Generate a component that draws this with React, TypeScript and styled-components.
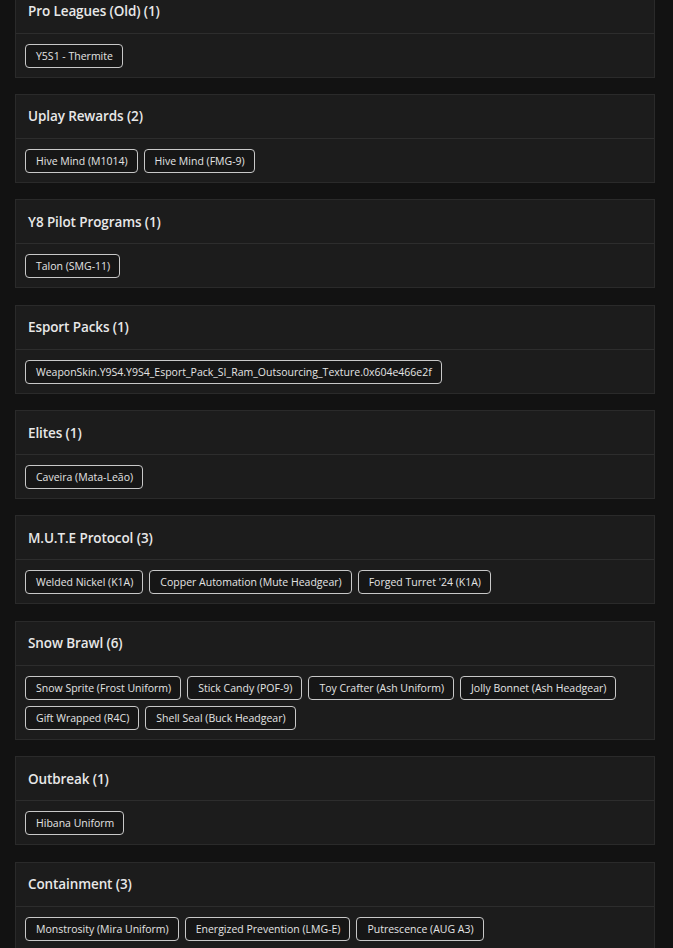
import React from "react"
import styled, { createGlobalStyle } from "styled-components"

const GlobalStyle = createGlobalStyle`
  html, body {
    margin: 0;
    padding: 0;
    background: #121212;
    font-family: "Open Sans", "Liberation Sans", sans-serif;
    overflow: hidden;
  }
`

interface Bundle {
  title: string
  items: string[]
}

const bundles: Bundle[] = [
  { title: "Pro Leagues (Old)", items: ["Y5S1 - Thermite"] },
  { title: "Uplay Rewards", items: ["Hive Mind (M1014)", "Hive Mind (FMG-9)"] },
  { title: "Y8 Pilot Programs", items: ["Talon (SMG-11)"] },
  {
    title: "Esport Packs",
    items: ["WeaponSkin.Y9S4.Y9S4_Esport_Pack_SI_Ram_Outsourcing_Texture.0x604e466e2f"]
  },
  { title: "Elites", items: ["Caveira (Mata-Leão)"] },
  {
    title: "M.U.T.E Protocol",
    items: ["Welded Nickel (K1A)", "Copper Automation (Mute Headgear)", "Forged Turret '24 (K1A)"]
  },
  {
    title: "Snow Brawl",
    items: [
      "Snow Sprite (Frost Uniform)",
      "Stick Candy (POF-9)",
      "Toy Crafter (Ash Uniform)",
      "Jolly Bonnet (Ash Headgear)",
      "Gift Wrapped (R4C)",
      "Shell Seal (Buck Headgear)"
    ]
  },
  { title: "Outbreak", items: ["Hibana Uniform"] },
  {
    title: "Containment",
    items: ["Monstrosity (Mira Uniform)", "Energized Prevention (LMG-E)", "Putrescence (AUG A3)"]
  }
]

const Page = styled.div`
  display: flex;
  flex-direction: column;
  gap: 16.4px;
  padding: 0 18px 0 15px;
  margin-top: -11.5px;
`

const Card = styled.section`
  background: #1c1c1c;
  border: 1px solid #2a2a2a;
`

const CardHeader = styled.header`
  height: 43px;
  display: flex;
  align-items: center;
  padding: 0 12px;
  border-bottom: 1px solid #2d2d2d;
`

const Title = styled.h3`
  margin: 0;
  font-size: 13.5px;
  font-weight: 600;
  letter-spacing: -0.1px;
  color: #e8e8e8;
`

const TagList = styled.div`
  display: flex;
  flex-wrap: wrap;
  gap: 6px;
  padding: 10px 9px 9px 9px;
`

const Tag = styled.span`
  display: inline-flex;
  align-items: center;
  height: 24px;
  box-sizing: border-box;
  padding: 0 9px 0 10px;
  border: 1px solid #c8c8c8;
  border-radius: 4px;
  background: #161616;
  color: #e4e4e4;
  font-size: 10.5px;
  white-space: nowrap;
`

export default function App() {
  return (
    <>
      <GlobalStyle />
      <Page>
        {bundles.map((b) => (
          <Card key={b.title}>
            <CardHeader>
              <Title>
                {b.title} ({b.items.length})
              </Title>
            </CardHeader>
            <TagList>
              {b.items.map((item) => (
                <Tag key={item}>{item}</Tag>
              ))}
            </TagList>
          </Card>
        ))}
      </Page>
    </>
  )
}
